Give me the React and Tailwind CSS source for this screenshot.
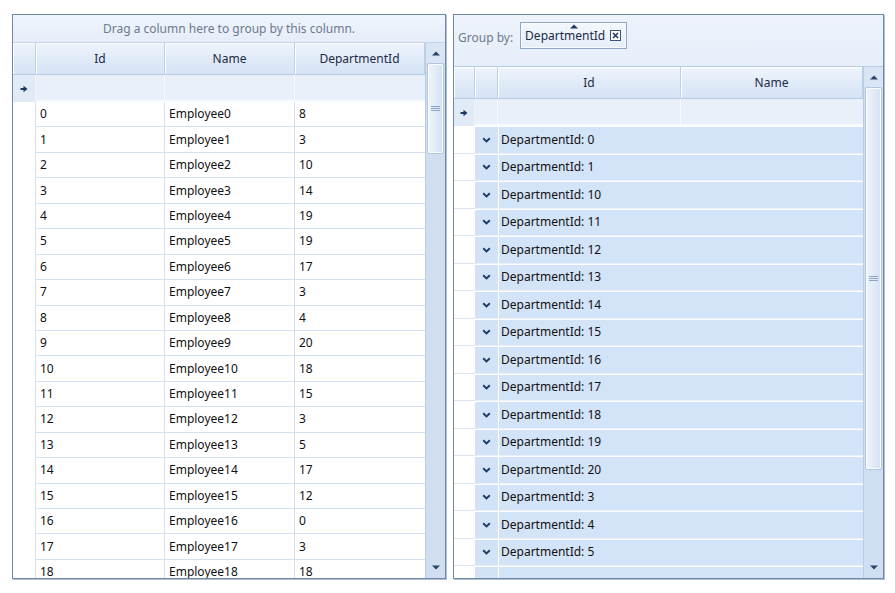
import React from "react";

const font = { fontFamily: '"Noto Sans", "Segoe UI", sans-serif' };

const RowArrow = () => (
  <svg width="8" height="8" viewBox="0 0 8 8">
    <path d="M0.5 3H3.5V0.8L7.5 4L3.5 7.2V5H0.5Z" fill="#1c3a64" />
  </svg>
);

const Chevron = () => (
  <svg width="9" height="6" viewBox="0 0 9 6">
    <path d="M1.2 1.2L4.5 4.4L7.8 1.2" fill="none" stroke="#1c3a64" strokeWidth="1.9" />
  </svg>
);

const UpTri = () => (
  <svg width="8" height="5" viewBox="0 0 8 5">
    <path d="M0 4.5L4 0.5L8 4.5Z" fill="#2a4368" />
  </svg>
);
const DownTri = () => (
  <svg width="8" height="5" viewBox="0 0 8 5">
    <path d="M0 0.5L4 4.5L8 0.5Z" fill="#2a4368" />
  </svg>
);

function ScrollBar({ thumbH }) {
  return (
    <div className="w-[20px] shrink-0 flex flex-col bg-[#cfdef1] border-l border-[#b9cce4]">
      <div className="h-[20px] shrink-0 flex items-center justify-center bg-[#d9e5f4]">
        <UpTri />
      </div>
      <div
        className="shrink-0 mx-[1px] rounded-[2px] border border-[#b3c7e1] bg-gradient-to-r from-[#eef4fb] via-[#e2ebf7] to-[#d4e2f3] shadow-[inset_0_0_0_1px_#f8fbff] flex items-center justify-center"
        style={{ height: thumbH }}
      >
        <div className="flex flex-col gap-[1px]">
          <div className="w-[9px] h-[1px] bg-[#8ba3c4]" />
          <div className="w-[9px] h-[1px] bg-[#8ba3c4]" />
          <div className="w-[9px] h-[1px] bg-[#8ba3c4]" />
        </div>
      </div>
      <div className="flex-1" />
      <div className="h-[22px] shrink-0 flex items-center justify-center">
        <DownTri />
      </div>
    </div>
  );
}

const hdrCell =
  "h-full shrink-0 flex items-center justify-center bg-gradient-to-b from-[#eef4fc] to-[#d5e3f5] border-r border-[#bdd0e8] border-b border-b-[#b7cbe5] shadow-[inset_1px_1px_0_#ffffff] text-[#1a2b45]";

const leftData = [8, 3, 10, 14, 19, 19, 17, 3, 4, 20, 18, 15, 3, 5, 17, 12, 0, 3, 18];
const groups = [0, 1, 10, 11, 12, 13, 14, 15, 16, 17, 18, 19, 20, 3, 4, 5];

function LeftGrid() {
  return (
    <div className="flex flex-col w-[434px] h-[565px] shrink-0 border border-[#6f87a8] bg-white shadow-[1px_1px_0_#b4bfcd]">
      <div className="h-[28px] shrink-0 flex items-center justify-center pt-[1px] bg-gradient-to-b from-[#f0f5fc] to-[#e5edf9] border-b border-[#c2d3ea] text-[#6b7a8f] text-[12px]">
        Drag a column here to group by this column.
      </div>
      <div className="flex flex-1 min-h-0">
        <div className="flex-1 flex flex-col min-w-0 overflow-hidden">
          <div className="h-[32px] shrink-0 flex text-[12px]">
            <div className={hdrCell + " w-[23px]"} />
            <div className={hdrCell + " w-[129px]"}>Id</div>
            <div className={hdrCell + " w-[130px]"}>Name</div>
            <div className={hdrCell + " w-[130px]"}>DepartmentId</div>
          </div>
          <div className="h-[27px] shrink-0 flex">
            <div className="w-[23px] shrink-0 flex items-center justify-center bg-[#e1eaf7] border-r border-[#edf2fa]">
              <RowArrow />
            </div>
            <div className="w-[129px] shrink-0 bg-[#e9f0f9] border-r border-b-2 border-[#f6f9fd]" />
            <div className="w-[130px] shrink-0 bg-[#e9f0f9] border-r border-b-2 border-[#f6f9fd]" />
            <div className="w-[130px] shrink-0 bg-[#e9f0f9] border-b-2 border-[#f6f9fd]" />
          </div>
          {leftData.map((d, i) => (
            <div key={i} className="h-[25.44px] shrink-0 flex text-[12px] text-[#111]">
              <div className="w-[23px] shrink-0 border-r border-[#d3e1f3]" />
              <div className="w-[129px] shrink-0 border-r border-b border-[#d3e1f3] flex items-center pl-[4px]">{i}</div>
              <div className="w-[130px] shrink-0 border-r border-b border-[#d3e1f3] flex items-center pl-[4px]">Employee{i}</div>
              <div className="w-[130px] shrink-0 border-b border-[#d3e1f3] flex items-center pl-[4px]">{d}</div>
            </div>
          ))}
        </div>
        <ScrollBar thumbH={91} />
      </div>
    </div>
  );
}

function RightGrid() {
  return (
    <div className="flex flex-col w-[431px] h-[565px] shrink-0 border border-[#6f87a8] bg-white shadow-[1px_1px_0_#b4bfcd]">
      <div className="h-[52px] shrink-0 flex items-start pt-[7px] pl-[4px] bg-gradient-to-b from-[#eef3fb] to-[#e6eefa] border-b border-[#b9cce6] text-[12px]">
        <span className="text-[#6b7a8f] mt-[7px]">Group by:</span>
        <div className="relative ml-[7px] h-[27px] flex items-center pl-[4px] pr-[5px] border border-[#8fa7c7] bg-gradient-to-b from-[#f3f7fd] to-[#e6eef9] shadow-[inset_0_0_0_1px_#fafcff] text-[#1a2b45]">
          <div className="absolute left-1/2 -translate-x-1/2 top-[1px]">
            <svg width="9" height="5" viewBox="0 0 9 5">
              <path d="M0.5 4.5L4.5 0.5L8.5 4.5Z" fill="#1c3a64" />
            </svg>
          </div>
          <span>DepartmentId</span>
          <div className="ml-[5px] w-[11px] h-[11px] border border-[#3a5579] bg-white flex items-center justify-center">
            <svg width="7" height="7" viewBox="0 0 7 7">
              <path d="M1 1L6 6M6 1L1 6" stroke="#1c3a64" strokeWidth="1.6" />
            </svg>
          </div>
        </div>
      </div>
      <div className="flex flex-1 min-h-0">
        <div className="flex-1 flex flex-col min-w-0 overflow-hidden">
          <div className="h-[32px] shrink-0 flex text-[12px]">
            <div className={hdrCell + " w-[21px]"} />
            <div className={hdrCell + " w-[23px]"} />
            <div className={hdrCell + " w-[183px]"}>Id</div>
            <div className={hdrCell + " w-[182px]"}>Name</div>
          </div>
          <div className="h-[27px] shrink-0 flex">
            <div className="w-[21px] shrink-0 flex items-center justify-center bg-[#e1eaf7] border-r border-[#edf2fa]">
              <RowArrow />
            </div>
            <div className="w-[23px] shrink-0 bg-[#e9f0f9] border-r border-b-2 border-[#f6f9fd]" />
            <div className="w-[183px] shrink-0 bg-[#e9f0f9] border-r border-b-2 border-[#f6f9fd]" />
            <div className="w-[182px] shrink-0 bg-[#e9f0f9] border-b-2 border-[#f6f9fd]" />
          </div>
          {groups.map((g, i) => (
            <div key={i} className="h-[27.53px] shrink-0 flex text-[12px] text-[#111]">
              <div className="w-[21px] shrink-0 bg-white border-b border-[#dbe5f2]" />
              <div className="w-[23px] shrink-0 bg-[#d3e3f7] border-t border-white border-b border-b-[#e9f0fa] flex items-center justify-center">
                <Chevron />
              </div>
              <div className="flex-1 bg-[#d4e4f8] border-l border-t border-white border-b border-b-[#e9f0fa] flex items-center pl-[2px]">
                DepartmentId: {g}
              </div>
            </div>
          ))}
          <div className="h-[27.53px] shrink-0 flex">
            <div className="w-[21px] shrink-0 bg-white" />
            <div className="w-[23px] shrink-0 bg-[#d3e3f7] border-t border-white" />
            <div className="flex-1 bg-[#d4e4f8] border-l border-t border-white" />
          </div>
        </div>
        <ScrollBar thumbH={383} />
      </div>
    </div>
  );
}

export default function App() {
  return (
    <div className="w-[895px] h-[593px] bg-white pl-[12px] pt-[14px] flex gap-[7px]" style={font}>
      <LeftGrid />
      <RightGrid />
    </div>
  );
}
